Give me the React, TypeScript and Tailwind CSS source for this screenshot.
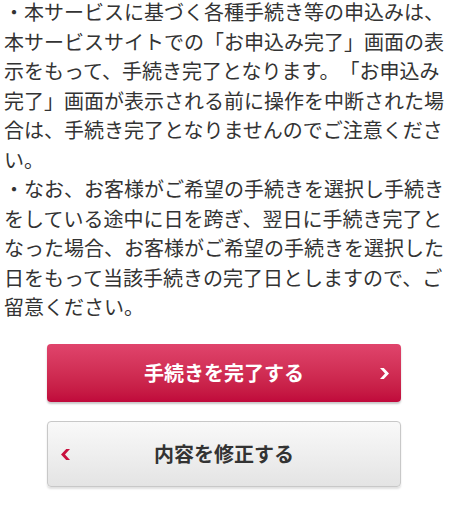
import React from 'react';

const notes = [
  '・本サービスに基づく各種手続き等の申込みは、本サービスサイトでの「お申込み完了」画面の表示をもって、手続き完了となります。「お申込み完了」画面が表示される前に操作を中断された場合は、手続き完了となりませんのでご注意ください。',
  '・なお、お客様がご希望の手続きを選択し手続きをしている途中に日を跨ぎ、翌日に手続き完了となった場合、お客様がご希望の手続きを選択した日をもって当該手続きの完了日としますので、ご留意ください。',
];

const ChevronRight = ({ className }: { className?: string }) => (
  <svg viewBox="0 0 9 11" className={className}>
    <polygon points="0,0 3.8,0 9,5.5 3.8,11 0,11 5,5.5" fill="currentColor" />
  </svg>
);

const ChevronLeft = ({ className }: { className?: string }) => (
  <svg viewBox="0 0 9 11" className={className}>
    <polygon points="9,0 5.2,0 0,5.5 5.2,11 9,11 4,5.5" fill="currentColor" />
  </svg>
);

const App = () => {
  return (
    <div
      className="w-[454px] h-[516px] overflow-hidden bg-white text-[#333]"
      style={{ fontFamily: '"Noto Sans CJK JP", "Noto Sans", sans-serif' }}
    >
      <div className="-mt-[3px] px-[4px] text-[20px] leading-[29.5px] [text-spacing-trim:space-all]">
        {notes.map((text, i) => (
          <p key={i}>{text}</p>
        ))}
      </div>

      <div className="ml-[47px] mt-[22px] flex w-[354px] flex-col gap-[19px]">
        <button className="relative flex h-[58px] items-center justify-center rounded-[4px] bg-gradient-to-b from-[#e0446c] to-[#c0083b] text-[20px] font-bold text-white shadow-[0_2px_2px_rgba(0,0,0,0.22)]">
          手続きを完了する
          <ChevronRight className="absolute right-[12px] top-[24px] h-[11px] w-[9px] text-white" />
        </button>
        <button className="relative flex h-[66px] items-center justify-center rounded-[4px] border border-[#c8c8c8] bg-gradient-to-b from-[#f9f9f9] to-[#e4e4e4] text-[20px] font-bold text-[#333] shadow-[0_2px_2px_rgba(0,0,0,0.12)]">
          内容を修正する
          <ChevronLeft className="absolute left-[13px] top-[27px] h-[11px] w-[9px] text-[#c8103e]" />
        </button>
      </div>
    </div>
  );
};

export default App;
